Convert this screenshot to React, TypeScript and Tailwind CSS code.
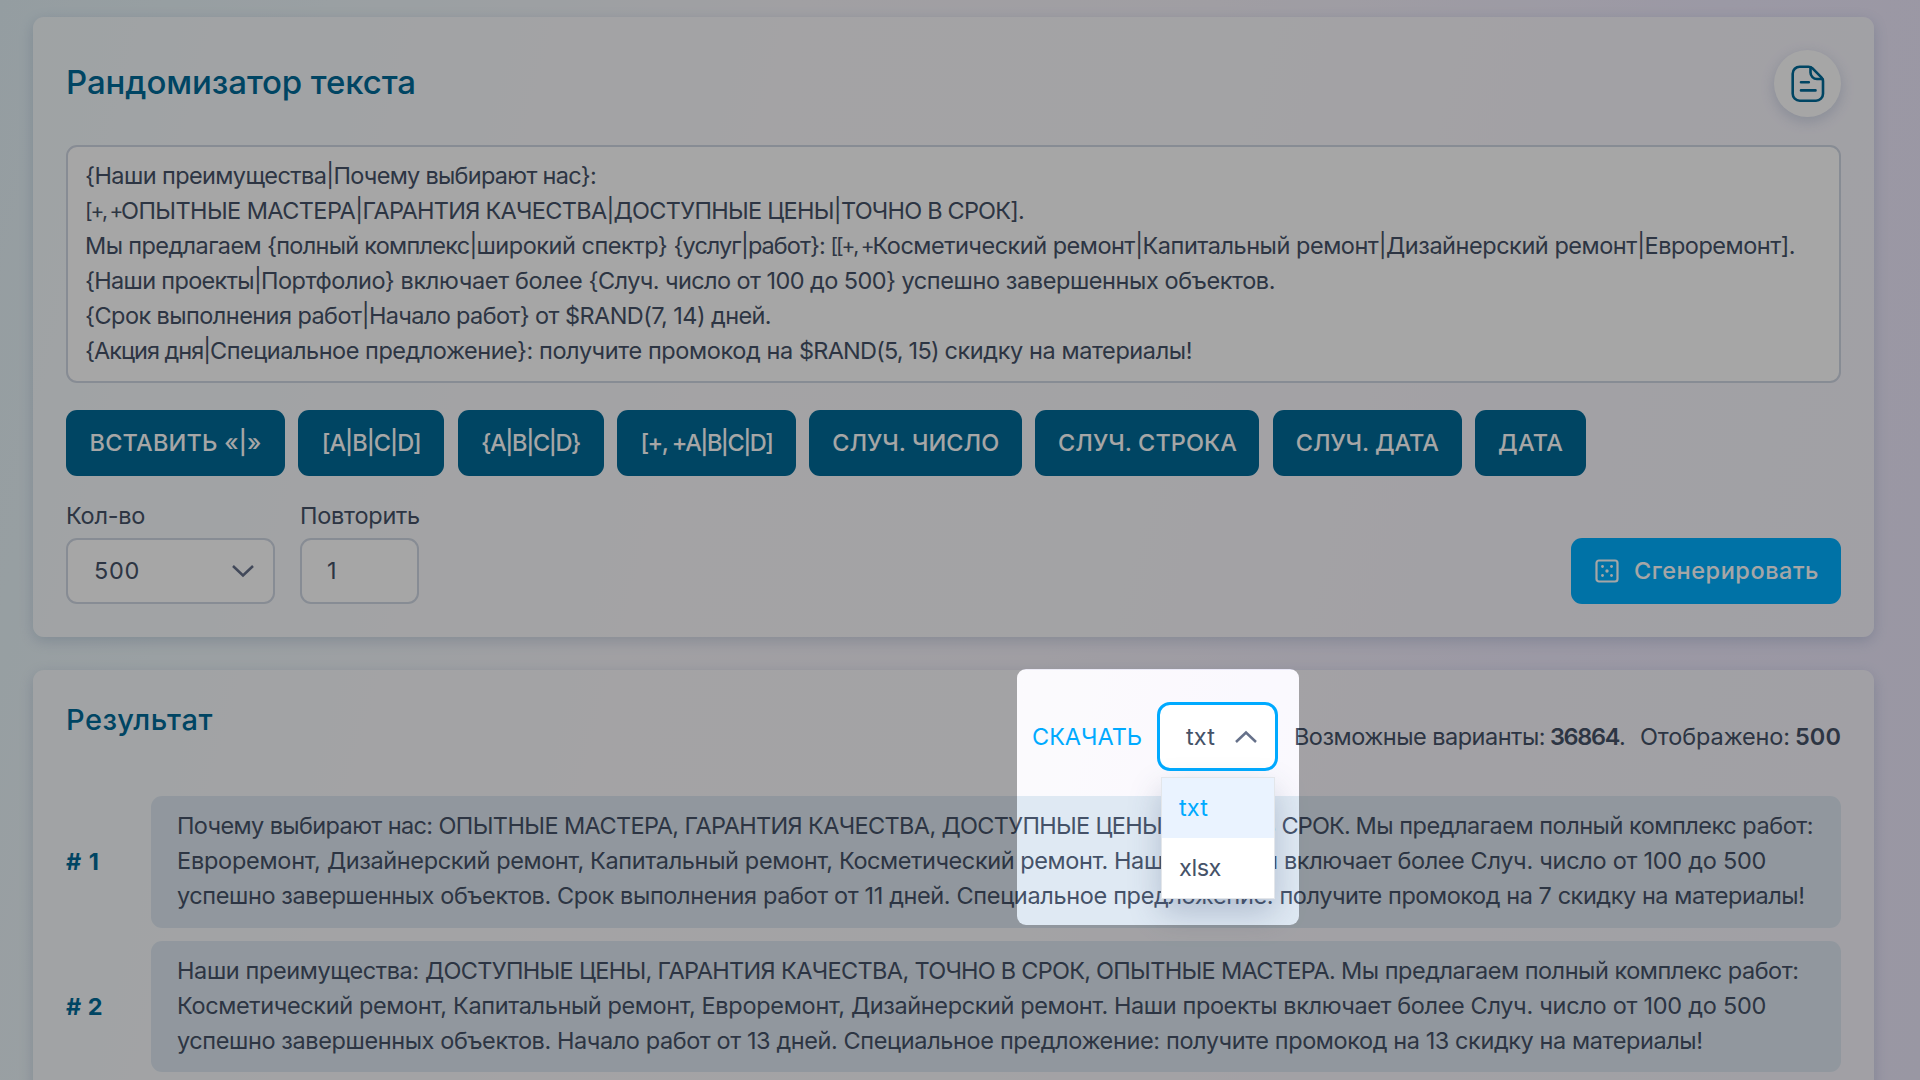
import { Fragment, useLayoutEffect, useRef, useState } from "react";

/** One piece of text whose tracking is adjusted so that it spans `w` pixels. */
function Line({ w, children, className = "" }: { w: number; children: string; className?: string }) {
  const ref = useRef<HTMLSpanElement>(null);
  const [tracking, setTracking] = useState(0);
  useLayoutEffect(() => {
    if (!ref.current) return;
    const natural = ref.current.getBoundingClientRect().width - tracking * children.length;
    setTracking((w - natural) / children.length);
  }, [w, children]);
  return (
    <span ref={ref} className={`inline-block whitespace-pre ${className}`} style={{ letterSpacing: `${tracking}px` }}>
      {children}
    </span>
  );
}

type Run = [string, number];

/** A row of text made of runs; each run carries the x at which it ends. */
function Runs({ start, runs }: { start: number; runs: Run[] }) {
  return (
    <div className="flex h-[35px]">
      {runs.map(([text, end], i) => (
        <Fragment key={i}>
          <Line w={end - (i ? runs[i - 1][1] : start)} className={text.includes("+, +") ? "text-[21px]" : ""}>
            {text}
          </Line>
        </Fragment>
      ))}
    </div>
  );
}

const template: Run[][] = [
  [["{Наши преимущества|", 333.5], ["Почему выбирают нас}:", 596]],
  [["[+, +", 121], ["ОПЫТНЫЕ МАСТЕРА|", 362.5], ["ГАРАНТИЯ КАЧЕСТВА|", 613.5], ["ДОСТУПНЫЕ ЦЕНЫ|", 841], ["ТОЧНО В СРОК].", 1024]],
  [["Мы предлагаем ", 267], ["{полный комплекс|", 476.5], ["широкий спектр} ", 673.5], ["{услуг|работ}: ", 830.5], ["[[+, +", 872.5], ["Косметический ремонт|", 1142.5], ["Капитальный ремонт|", 1386], ["Дизайнерский ремонт|", 1644.5], ["Евроремонт].", 1795]],
  [["{Наши проекты|", 261], ["Портфолио} ", 400.5], ["включает более ", 588.5], ["{Случ. число от 100 до 500} ", 901.5], ["успешно завершенных объектов.", 1275]],
  [["{Срок выполнения работ|", 369], ["Начало работ} ", 535], ["от $RAND(7, 14) ", 711], ["дней.", 771]],
  [["{Акция дня|", 210], ["Специальное предложение}: ", 539], ["получите промокод на ", 799], ["$RAND(5, 15) ", 944.5], ["скидку на материалы!", 1192]],
];

const inserts: [string, number, string][] = [
  ["ВСТАВИТЬ «|»", 172, "w-[219px]"],
  ["[A|B|C|D]", 99, "w-[146px]"],
  ["{A|B|C|D}", 99, "w-[146px]"],
  ["[+, +A|B|C|D]", 132, "w-[179px]"],
  ["СЛУЧ. ЧИСЛО", 167, "w-[213px]"],
  ["СЛУЧ. СТРОКА", 179, "w-[224px]"],
  ["СЛУЧ. ДАТА", 143, "w-[189px]"],
  ["ДАТА", 65, "w-[111px]"],
];

const results: { id: string; lines: Run[][] }[] = [
  {
    id: "# 1",
    lines: [
      [["Почему выбирают нас: ", 438.5], ["ОПЫТНЫЕ МАСТЕРА, ", 684.5], ["ГАРАНТИЯ КАЧЕСТВА, ", 941.5], ["ДОСТУПНЫЕ ЦЕНЫ, ", 1174], ["ТОЧНО В ", 1281.5], ["СРОК. ", 1355.5], ["Мы предлагаем полный комплекс работ:", 1813]],
      [["Евроремонт, ", 327], ["Дизайнерский ремонт, ", 590], ["Капитальный ремонт, ", 839], ["Косметический ремонт. ", 1114], ["Наши проекты ", 1284], ["включает более ", 1470.5], ["Случ. число от 100 до 500", 1766]],
      [["успешно завершенных объектов. ", 557], ["Срок выполнения работ от 11 дней. ", 956.5], ["Специальное предложение: ", 1279.5], ["получите промокод на 7 скидку на материалы!", 1804.5]],
    ],
  },
  {
    id: "# 2",
    lines: [
      [["Наши преимущества: ", 425], ["ДОСТУПНЫЕ ЦЕНЫ, ", 657.5], ["ГАРАНТИЯ КАЧЕСТВА, ", 914.5], ["ТОЧНО В СРОК, ", 1096], ["ОПЫТНЫЕ МАСТЕРА. ", 1341], ["Мы предлагаем полный комплекс работ:", 1798.5]],
      [["Косметический ремонт, ", 453], ["Капитальный ремонт, ", 701.5], ["Евроремонт, ", 851], ["Дизайнерский ремонт. ", 1114], ["Наши проекты включает более ", 1470.5], ["Случ. число от 100 до 500", 1766]],
      [["успешно завершенных объектов. ", 557], ["Начало работ от 13 дней. ", 843.5], ["Специальное предложение: ", 1166], ["получите промокод на 13 скидку на материалы!", 1702.5]],
    ],
  },
];

function DocumentIcon() {
  return (
    <svg width="36" height="40" viewBox="0 0 36 40" fill="none" stroke="currentColor" strokeWidth="2.6" strokeLinecap="round" strokeLinejoin="round">
      <path d="M18.500 2.700H9.700a7 7 0 0 0-7 7v20a7 7 0 0 0 7 7H26a7 7 0 0 0 7-7V17c0-1.500-.6-2.700-1.600-3.700L22.300 4.200c-1-1-2.300-1.500-3.800-1.500Z" />
      <path d="M20.500 3.200v5.300a6.500 6.500 0 0 0 6.500 6.500h5.300" />
      <path d="M11 18.200h7.800M11 26.400h14.500" />
    </svg>
  );
}

function DiceIcon() {
  return (
    <svg width="24" height="24" viewBox="0 0 24 24" fill="none" stroke="currentColor" strokeWidth="2.2">
      <rect x="1.500" y="1.500" width="21" height="21" rx="2.500" />
      <g fill="currentColor" stroke="none">
        <circle cx="7.500" cy="7.500" r="1.400" />
        <circle cx="16.500" cy="7.500" r="1.400" />
        <circle cx="12" cy="12" r="1.700" />
        <circle cx="7.500" cy="16.500" r="1.400" />
        <circle cx="16.500" cy="16.500" r="1.400" />
      </g>
    </svg>
  );
}

function Chevron({ up = false }: { up?: boolean }) {
  return (
    <svg width="22" height="14" viewBox="0 0 22 14" fill="none" className="text-[#66718a]" stroke="currentColor" strokeWidth="2.500" strokeLinejoin="miter">
      <path d={up ? "M1 12 11 2.500 21 12" : "M1 2 11 11.500 21 2"} />
    </svg>
  );
}

const card =
  "rounded-[11px] bg-white/60 px-[33px] shadow-[0_4px_14px_rgba(70,100,150,0.22)]";
const field = "flex h-[66px] items-center rounded-[11px] border-2 border-[#d0d7e3] bg-white";

export default function App() {
  return (
    <div className="relative h-[1080px] w-[1920px] overflow-hidden bg-[linear-gradient(105deg,#e4f2f8_0%,#edf6fa_15%,#f7f6fb_36%,#f6f3fb_55%,#efebfd_78%,#ece8fb_100%)] px-[33px] pt-[17px] pr-[46px] font-['Inter','Noto_Sans',sans-serif] text-[23.500px] leading-[35px] text-[#455268]">
      <section className={`${card} h-[620px]`}>
        <header className="flex h-[128px] items-start justify-between pt-[33px]">
          <h1 className="mt-[12px] text-[33px] leading-[40px] font-medium text-[#006a98]">
            <Line w={350}>Рандомизатор текста</Line>
          </h1>
          <button className="flex size-[67px] items-center justify-center rounded-full bg-white text-[#006a98] shadow-[0_4px_14px_rgba(70,100,150,0.22)]">
            <DocumentIcon />
          </button>
        </header>
        <div className="h-[238px] rounded-[11px] border-2 border-[#d0d7e3] bg-white pt-[11px] pl-[17px]">
          {template.map((runs, i) => (
            <Runs key={i} start={85} runs={runs} />
          ))}
        </div>
        <div className="mt-[27px] flex gap-[13.300px]">
          {inserts.map(([t, w, cls]) => (
            <button key={t} className={`${cls} flex h-[66px] shrink-0 items-center justify-center rounded-[11px] bg-[#006a98] pb-[2px] font-medium text-white`}>
              <Line w={w}>{t}</Line>
            </button>
          ))}
        </div>
        <div className="mt-[22px] flex items-end">
          <label className="block w-[209px]">
            <span className="flex h-[40px]">
              <Line w={79}>Кол-во</Line>
            </span>
            <span className={`${field} justify-between pr-[19px] pl-[26px]`}>
              <Line w={46} className="pb-px">500</Line>
              <Chevron />
            </span>
          </label>
          <label className="ml-[25px] block w-[119px]">
            <span className="flex h-[40px]">
              <Line w={120}>Повторить</Line>
            </span>
            <span className={`${field} pl-[25px]`}>
              <Line w={13} className="pb-px">1</Line>
            </span>
          </label>
          <button className="ml-auto flex h-[66px] w-[270px] items-center gap-[15px] rounded-[11px] bg-[#00b0ff] pl-[24px] font-medium text-white">
            <DiceIcon />
            <Line w={185} className="pb-[2px]">Сгенерировать</Line>
          </button>
        </div>
      </section>

      <section className={`${card} mt-[33px] h-[520px] pt-[32px]`}>
        <div className="flex h-[94px] items-start justify-between">
          <h2 className="text-[29px] leading-[36px] font-medium text-[#006a98]">
            <Line w={147}>Результат</Line>
          </h2>
          <div className="flex h-[69px] items-center">
            <Line w={110} className="mr-[15px] text-[#00aaff]">СКАЧАТЬ</Line>
            <div className="relative flex h-[69px] w-[121px] items-center justify-between rounded-[13px] border-[3px] border-[#00aaff] bg-white pr-[18px] pl-[26px]">
              <Line w={29}>txt</Line>
              <Chevron up />
              <div className="absolute top-[72px] left-px z-10 w-[114px] border-[1.500px] border-[#e3e6ea] bg-white shadow-[0_14px_30px_rgba(60,80,120,0.28)]">
                <div className="flex h-[60px] items-center bg-[#eaf3ff] pb-px pl-[17px] text-[#00aaff]">
                  <Line w={29}>txt</Line>
                </div>
                <div className="flex h-[60px] items-center pb-[2px] pl-[17px]">
                  <Line w={42}>xlsx</Line>
                </div>
              </div>
            </div>
            <Line w={251} className="ml-[16px]">Возможные варианты:</Line>
            <Line w={69} className="ml-[5px] font-semibold">36864</Line>
            <span className="w-[21px]">.</span>
            <Line w={150}>Отображено:</Line>
            <Line w={46} className="ml-[5px] font-semibold">500</Line>
          </div>
        </div>
        <div className="flex flex-col gap-[13px]">
          {results.map((r) => (
            <div key={r.id} className="flex h-[131.500px] items-center">
              <span className="w-[85px] font-bold text-[#006a98]">
                <Line w={r.id === "# 1" ? 34 : 37}>{r.id}</Line>
              </span>
              <div className="h-full flex-1 rounded-[11px] bg-[#dfe9f3] pt-[12px] pl-[26px]">
                {r.lines.map((runs, i) => (
                  <Runs key={i} start={177} runs={runs} />
                ))}
              </div>
            </div>
          ))}
        </div>
      </section>

      <div className="pointer-events-none absolute top-[669px] left-[1017px] z-20 h-[256px] w-[282px] rounded-[9px] shadow-[0_0_0_2000px_rgba(0,0,0,0.35)]" />
    </div>
  );
}
